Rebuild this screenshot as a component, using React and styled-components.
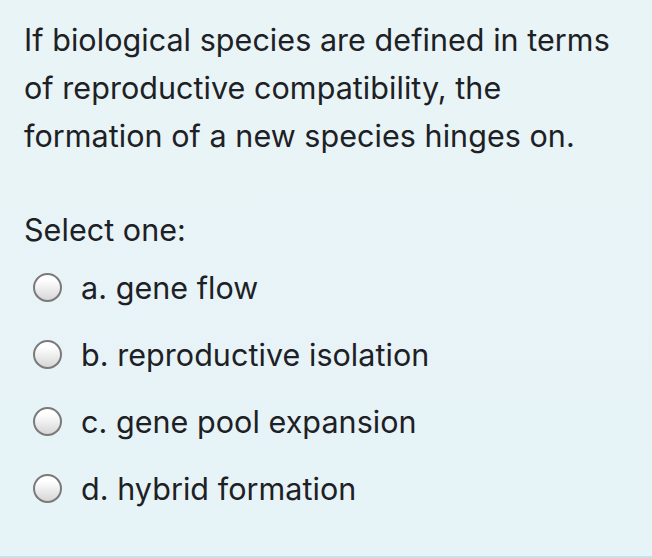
import styled, { createGlobalStyle } from "styled-components";

const GlobalStyle = createGlobalStyle`
  html, body {
    margin: 0;
    padding: 0;
    background: #e7f3f6;
  }
  * {
    box-sizing: border-box;
  }
`;

const Panel = styled.div`
  width: 652px;
  height: 558px;
  background: linear-gradient(#e9f4f6, #e6f3f7);
  border-bottom: 2px solid #c6e3ed;
  padding: 16px 24px 0 24px;
  font-family: Inter, "Noto Sans", sans-serif;
  color: #1d2125;
  overflow: hidden;
`;

const Question = styled.p`
  margin: 0;
  width: 602px;
  font-size: 30.5px;
  line-height: 48px;
  letter-spacing: 0.05px;
`;

const Prompt = styled.div`
  margin-top: 46px;
  font-size: 30.5px;
  line-height: 48px;
  letter-spacing: 0.05px;
`;

const Options = styled.div`
  display: flex;
  flex-direction: column;
  padding-left: 9px;
`;

const Option = styled.label`
  display: flex;
  align-items: center;
  height: 67px;
  font-size: 30.5px;
  letter-spacing: 0.05px;
  cursor: pointer;
`;

const Radio = styled.span`
  width: 29px;
  height: 29px;
  border-radius: 50%;
  border: 2px solid #7a7a7a;
  background: linear-gradient(#ffffff 20%, #d6d6d6);
  margin-right: 19px;
  flex-shrink: 0;
`;

const choices = [
  "a. gene flow",
  "b. reproductive isolation",
  "c. gene pool expansion",
  "d. hybrid formation",
];

export default function App() {
  return (
    <>
      <GlobalStyle />
      <Panel>
        <Question>
          If biological species are defined in terms of reproductive
          compatibility, the formation of a new species hinges on.
        </Question>
        <Prompt>Select one:</Prompt>
        <Options>
          {choices.map((c) => (
            <Option key={c}>
              <Radio />
              {c}
            </Option>
          ))}
        </Options>
      </Panel>
    </>
  );
}
